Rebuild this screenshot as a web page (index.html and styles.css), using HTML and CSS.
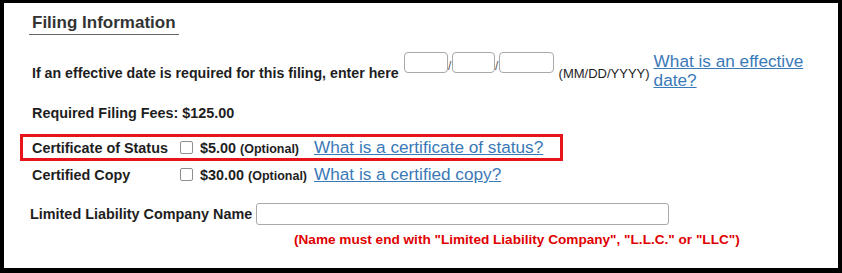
FILE: index.html
```html
<!DOCTYPE html>
<html lang="en">
<head>
    <meta charset="UTF-8">
    <meta name="viewport" content="width=device-width, initial-scale=1.0">
    <title>Filing Information</title>
    <link rel="stylesheet" href="styles.css">
</head>
<body>
    <div class="frame">
        <h2 class="section-title">Filing Information</h2>

        <div class="date-row">
            <label class="field-label date-label" for="eff-mm">If an effective date is required for this filing, enter here</label>
            <input class="date-box mm" id="eff-mm" type="text">
            <span class="slash">/</span>
            <input class="date-box dd" type="text">
            <span class="slash">/</span>
            <input class="date-box yyyy" type="text">
            <span class="date-hint">(MM/DD/YYYY)</span>
            <a class="help-link date-link" href="#">What is an effective date?</a>
        </div>

        <div class="fees">Required Filing Fees: $125.00</div>

        <div class="option-row highlighted">
            <span class="field-label">Certificate of Status</span>
            <input class="check" type="checkbox">
            <span class="price">$5.00 <span class="optional">(Optional)</span></span>
            <a class="help-link" href="#">What is a certificate of status?</a>
        </div>
        <div class="option-row plain">
            <span class="field-label">Certified Copy</span>
            <input class="check" type="checkbox">
            <span class="price">$30.00 <span class="optional">(Optional)</span></span>
            <a class="help-link" href="#">What is a certified copy?</a>
        </div>

        <div class="name-row">
            <label class="field-label" for="llc-name">Limited Liability Company Name</label>
            <input class="name-box" id="llc-name" type="text">
            <span class="name-note">(Name must end with "Limited Liability Company", "L.L.C." or "LLC")</span>
        </div>
    </div>
</body>
</html>
```

FILE: styles.css
```css
html, body {
    margin: 0;
    padding: 0;
    background: #000;
}

.frame {
    box-sizing: border-box;
    width: 842px;
    height: 273px;
    background: #fff;
    border-style: solid;
    border-color: #000;
    border-width: 3px 4px 5px 4px;
    padding: 10px 25px 0 28px;
    font-family: "Liberation Sans", Arial, sans-serif;
    color: #1e1e1e;
}

.section-title {
    display: inline-block;
    margin: 0 0 0 -3px;
    padding: 0 3px 1px 3px;
    font-size: 17px;
    line-height: 20px;
    font-weight: bold;
    color: #333;
    border-bottom: 1px solid #666;
}

.field-label {
    font-size: 14.4px;
    font-weight: bold;
    line-height: 16px;
}

/* effective date */
.date-row {
    display: flex;
    align-items: flex-start;
    margin-top: 17px;
}

.date-label {
    margin-top: 13px;
    margin-right: 5px;
    font-size: 14.2px;
    white-space: nowrap;
}

.date-box {
    box-sizing: border-box;
    height: 21px;
    margin: 0;
    padding: 1px 3px;
    border: 1px solid #a9a9a9;
    border-radius: 4px;
    font: 13px "Liberation Sans", Arial, sans-serif;
}

.date-box.mm { width: 44px; }
.date-box.dd { width: 43px; }
.date-box.yyyy { width: 55px; }

.slash {
    width: 4px;
    margin-top: 7px;
    font-size: 12px;
    line-height: 14px;
    color: #555;
    text-align: center;
}

.date-hint {
    margin: 14px 4px 0 5px;
    font-size: 13px;
    line-height: 16px;
    white-space: nowrap;
}

.help-link {
    color: #3a79b8;
    font-size: 17.2px;
    line-height: 19px;
    text-decoration: underline;
}

.date-link {
    flex: 1;
    min-width: 0;
}

.fees {
    margin-top: 15px;
    font-size: 14.4px;
    font-weight: bold;
    line-height: 16px;
}

/* optional certificates */
.option-row {
    display: grid;
    grid-template-columns: 148px 20px 114px auto;
    align-items: center;
    width: max-content;
    height: 21px;
}

.option-row.highlighted {
    margin: 13px 0 0 -12px;
    padding: 0 17px 0 9px;
    border: 3px solid #e8141c;
}

.option-row.plain {
    margin: 3px 0 0 0;
}

.check {
    appearance: none;
    -webkit-appearance: none;
    box-sizing: border-box;
    width: 13px;
    height: 13px;
    margin: 0;
    border: 1px solid #8f8f8f;
    border-radius: 2px;
    background: #fff;
}

.price {
    font-size: 14.4px;
    font-weight: bold;
    white-space: nowrap;
}

.optional {
    font-size: 12.5px;
}

/* company name */
.name-row {
    display: grid;
    grid-template-columns: 226px auto;
    align-items: center;
    row-gap: 7px;
    margin: 18px 0 0 -2px;
}

.name-box {
    box-sizing: border-box;
    width: 413px;
    height: 22px;
    margin: 0;
    border: 1px solid #a9a9a9;
    border-radius: 3px;
}

.name-note {
    grid-column: 2;
    margin-left: 38px;
    color: #e00000;
    font-size: 13.6px;
    font-weight: bold;
    line-height: 15px;
    white-space: nowrap;
}
```
